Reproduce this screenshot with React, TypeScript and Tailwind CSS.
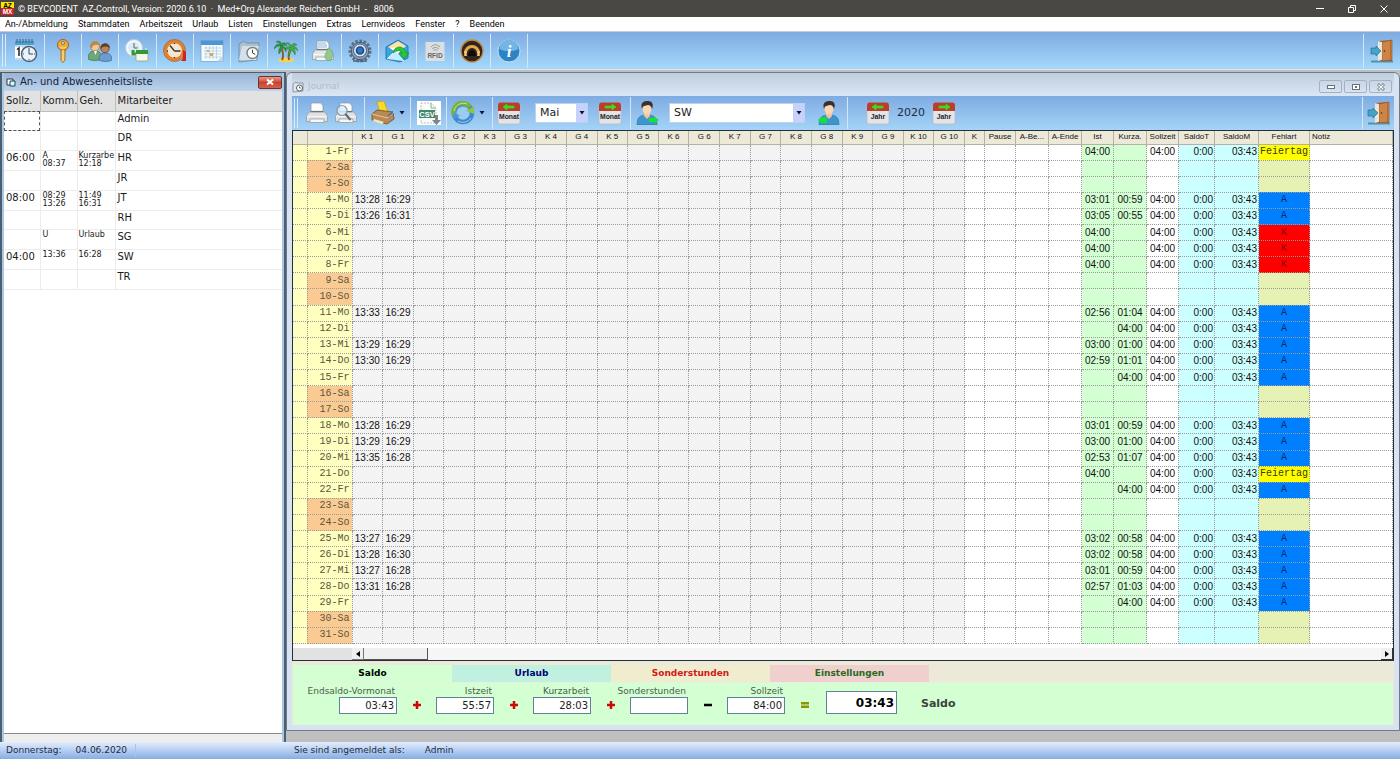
import React, { useState } from 'react';

type IconName =
  | 'calendarClock' | 'key' | 'users' | 'clockNote' | 'alarm' | 'calendar' | 'folderClock'
  | 'palms' | 'printerGreen' | 'gear' | 'mail' | 'rfid' | 'headset' | 'info';

interface Employee {
  soll: string;
  komm: string[];
  geh: string[];
  name: string;
}

interface Day {
  k1?: string;
  g1?: string;
  ist?: string;
  kurz?: string;
  art?: string;
}

const menuItems = [
  'An-/Abmeldung', 'Stammdaten', 'Arbeitszeit', 'Urlaub', 'Listen', 'Einstellungen',
  'Extras', 'Lernvideos', 'Fenster', '?', 'Beenden',
];

const tools: { icon: IconName; label: string }[] = [
  { icon: 'calendarClock', label: 'An-/Abmeldung' },
  { icon: 'key', label: 'Passwort' },
  { icon: 'users', label: 'Mitarbeiter' },
  { icon: 'clockNote', label: 'Arbeitszeit' },
  { icon: 'alarm', label: 'Sollzeit' },
  { icon: 'calendar', label: 'Kalender' },
  { icon: 'folderClock', label: 'Journal' },
  { icon: 'palms', label: 'Urlaub' },
  { icon: 'printerGreen', label: 'Drucken' },
  { icon: 'gear', label: 'Einstellungen' },
  { icon: 'mail', label: 'Nachricht' },
  { icon: 'rfid', label: 'RFID' },
  { icon: 'headset', label: 'Support' },
  { icon: 'info', label: 'Info' },
];

const employees: Employee[] = [
  { soll: '', komm: [], geh: [], name: 'Admin' },
  { soll: '', komm: [], geh: [], name: 'DR' },
  { soll: '06:00', komm: ['A', '08:37'], geh: ['Kurzarbe', '12:18'], name: 'HR' },
  { soll: '', komm: [], geh: [], name: 'JR' },
  { soll: '08:00', komm: ['08:29', '13:26'], geh: ['11:49', '16:31'], name: 'JT' },
  { soll: '', komm: [], geh: [], name: 'RH' },
  { soll: '', komm: ['U'], geh: ['Urlaub'], name: 'SG' },
  { soll: '04:00', komm: ['13:36'], geh: ['16:28'], name: 'SW' },
  { soll: '', komm: [], geh: [], name: 'TR' },
];

const weekdays = ['Mo', 'Di', 'Mi', 'Do', 'Fr', 'Sa', 'So'];

const days: Record<number, Day> = {
  1: { ist: '04:00', art: 'Feiertag' },
  4: { k1: '13:28', g1: '16:29', ist: '03:01', kurz: '00:59', art: 'A' },
  5: { k1: '13:26', g1: '16:31', ist: '03:05', kurz: '00:55', art: 'A' },
  6: { ist: '04:00', art: 'K' },
  7: { ist: '04:00', art: 'K' },
  8: { ist: '04:00', art: 'K' },
  11: { k1: '13:33', g1: '16:29', ist: '02:56', kurz: '01:04', art: 'A' },
  12: { kurz: '04:00', art: 'A' },
  13: { k1: '13:29', g1: '16:29', ist: '03:00', kurz: '01:00', art: 'A' },
  14: { k1: '13:30', g1: '16:29', ist: '02:59', kurz: '01:01', art: 'A' },
  15: { kurz: '04:00', art: 'A' },
  18: { k1: '13:28', g1: '16:29', ist: '03:01', kurz: '00:59', art: 'A' },
  19: { k1: '13:29', g1: '16:29', ist: '03:00', kurz: '01:00', art: 'A' },
  20: { k1: '13:35', g1: '16:28', ist: '02:53', kurz: '01:07', art: 'A' },
  21: { ist: '04:00', art: 'Feiertag' },
  22: { kurz: '04:00', art: 'A' },
  25: { k1: '13:27', g1: '16:29', ist: '03:02', kurz: '00:58', art: 'A' },
  26: { k1: '13:28', g1: '16:30', ist: '03:02', kurz: '00:58', art: 'A' },
  27: { k1: '13:27', g1: '16:28', ist: '03:01', kurz: '00:59', art: 'A' },
  28: { k1: '13:31', g1: '16:28', ist: '02:57', kurz: '01:03', art: 'A' },
  29: { kurz: '04:00', art: 'A' },
};

const dayNumbers = Array.from({ length: 31 }, (_, i) => i + 1);
const pairs = Array.from({ length: 10 }, (_, i) => i + 1);

const artColors: Record<string, string> = {
  A: 'bg-[#0080ff] text-[#0a2a6a]',
  K: 'bg-[#ff0000] text-[#8a0000]',
  Feiertag: 'bg-[#ffff00] text-[#3a3a00]',
};

const tabs = [
  { label: 'Saldo', style: 'bg-[#d3ffd3] text-black' },
  { label: 'Urlaub', style: 'bg-[#bff0e0] text-[#000070]' },
  { label: 'Sonderstunden', style: 'bg-[#f0edcf] text-[#d01818]' },
  { label: 'Einstellungen', style: 'bg-[#f0cfcf] text-[#2a6a1a]' },
];

const balance = [
  { id: 'vormonat', label: 'Endsaldo-Vormonat', value: '03:43', op: '+' },
  { id: 'istzeit', label: 'Istzeit', value: '55:57', op: '+' },
  { id: 'kurzarbeit', label: 'Kurzarbeit', value: '28:03', op: '+' },
  { id: 'sonder', label: 'Sonderstunden', value: '', op: '-' },
  { id: 'sollzeit', label: 'Sollzeit', value: '84:00', op: '=' },
];

function Clock({ x, y, r, rim, face = '#f4f9fd' }: { x: number; y: number; r: number; rim: string; face?: string }) {
  return (
    <g>
      <circle cx={x} cy={y} r={r} fill={face} stroke={rim} strokeWidth={r / 4} />
      <path d={`M${x} ${y - r * 0.6}V${y}L${x + r * 0.5} ${y + r * 0.25}`} fill="none" stroke="#34495e" strokeWidth="1" />
    </g>
  );
}

function PrinterShape({ body = '#e4e6e8', edge = '#8e969c', paper = '#fbfcfd' }) {
  return (
    <g stroke={edge} strokeWidth="0.7">
      <path d="M6 2h10l2 3v7H6z" fill={paper} />
      <path d="M4 11h16l2.500 4v5.500H1.500V15z" fill={body} />
      <path d="M2 15.500h20" stroke="#fff" />
      <path d="M5 18h14v3.500H5z" fill="#f6f7f7" />
      <path d="M6 10.500h12" stroke="#6d757b" strokeWidth="1.200" />
    </g>
  );
}

function ToolIcon({ name }: { name: IconName }) {
  return (
    <svg viewBox="0 0 24 24" className="h-6 w-6" aria-hidden="true">
      {name === 'calendarClock' && (
        <g>
          <rect x="1" y="3" width="19" height="18" fill="#bcdcf7" />
          <rect x="1" y="2" width="19" height="4" fill="#4e9fc9" />
          <path d="M3 0v4M6 0v4M9 0v4M12 0v4M15 0v4M18 0v4" stroke="#2c6486" strokeWidth="1" />
          <rect x="1" y="8" width="7" height="11" fill="#fff" />
          <path d="M3 10.500L5 9v8" fill="none" stroke="#222" strokeWidth="1.500" />
          <circle cx="15" cy="15" r="7.500" fill="#e8f3fb" stroke="#50606e" strokeWidth="1.500" />
          <path d="M15 10v5h4M15 9v1M21 15h-1M15 21v-1M9 15h1" fill="none" stroke="#3b4954" />
        </g>
      )}
      {name === 'key' && (
        <g>
          <circle cx="12" cy="6" r="5.500" fill="#f0ae3a" stroke="#9c6515" />
          <circle cx="12" cy="4" r="1.700" fill="#a9c9ec" stroke="#9c6515" strokeWidth="0.700" />
          <path d="M10 11h4v10l-2 2.500-2-2z" fill="#f2b64a" stroke="#9c6515" strokeWidth="0.800" />
          <path d="M12 11v11M9 8c2 1.500 4 1.500 6 0" fill="none" stroke="#fde3a0" />
        </g>
      )}
      {name === 'users' && (
        <g strokeWidth="0.700">
          <path d="M0 20c0-6 3-8 7-8s7 2 7 8c-4 2-10 2-14 0z" fill="#6fa878" stroke="#3c7547" />
          <path d="M11 21c0-6 3-7 6.500-7s6.500 2 6.500 7c-4 2-9 2-13 0z" fill="#6c9ccf" stroke="#3d6799" />
          <circle cx="7" cy="7.500" r="4.500" fill="#f0c89c" stroke="#9b7044" />
          <path d="M2 9c-1-9 10-9 10-2-3-2-7-2-8 2z" fill="#b98a4a" />
          <circle cx="17" cy="9.500" r="4.200" fill="#b8855c" stroke="#5e3719" />
          <path d="M12.500 10c-1-7 9-8 9.500-1-4-2-7-2-9.500 1z" fill="#5f3f28" />
          <path d="M6 12l1.500 4L9 12" fill="#fff" />
        </g>
      )}
      {name === 'clockNote' && (
        <g>
          <circle cx="9" cy="9" r="8.500" fill="#f2f8fc" stroke="#b5cbdc" />
          <circle cx="9" cy="9" r="6" fill="#dceaf4" />
          <path d="M9 4v5h4" fill="none" stroke="#4b6577" />
          <path d="M8 11v4h4" fill="none" stroke="#2e9a2e" strokeWidth="3" />
          <rect x="11" y="12" width="12" height="10" rx="1" fill="#f4f6ee" stroke="#8b9a80" strokeWidth="0.700" />
          <rect x="11" y="11" width="12" height="4" fill="#2f9a35" />
          <path d="M13 11V9M21 11V9" stroke="#e5efe0" />
        </g>
      )}
      {name === 'alarm' && (
        <g>
          <circle cx="11.500" cy="11.500" r="9" fill="#f5e6d2" stroke="#e0822c" strokeWidth="3.500" />
          <circle cx="11.500" cy="11.500" r="11" fill="none" stroke="#a65a1e" strokeWidth="0.700" />
          <path d="M11.500 12L7 6.500M11.500 12h6M11.500 4v1M11.500 19v-1M4 12h1" stroke="#333" strokeWidth="1.300" />
          <path d="M20 11l3 2v9h-5l2-3z" fill="#d32020" />
        </g>
      )}
      {name === 'calendar' && (
        <g>
          <rect x="1" y="1.500" width="22" height="21" fill="#f5fafe" stroke="#7b9cbc" strokeWidth="0.700" />
          <rect x="1" y="1.500" width="22" height="4.500" fill="#4a97d4" />
          <path d="M4 9h17M4 12h17M4 15h17M4 18h17M6 7v13M9.500 7v13M13 7v13M16.500 7v13" stroke="#a9cde4" strokeWidth="0.700" />
          <path d="M7 11h2v2H7zM10 14h3v3h-3z" fill="#e8a23e" />
          <path d="M17 22.500l6-6v6z" fill="#bfd3e5" />
        </g>
      )}
      {name === 'folderClock' && (
        <g>
          <path d="M2 5l5-3 2 2h13l-2 17-18 2z" fill="#aebfcd" stroke="#718598" strokeWidth="0.800" />
          <path d="M5 7h17l-3 14H2z" fill="#d5e1ea" />
          <Clock x={15.5} y={14} r={5.5} rim="#777f87" face="#fffef3" />
        </g>
      )}
      {name === 'palms' && (
        <g>
          <ellipse cx="12" cy="21" rx="8" ry="2.500" fill="#f4d35b" />
          <path d="M8 21C10 17 9 12 7 7M15 21c-1-4 0-8 2-12" fill="none" stroke="#8f5d2c" strokeWidth="2" />
          <path d="M7 7C4 3 1 6 0 10c3-3 5-3 7-3-2 2-3 5-2 8 2-2 3-5 3-7 2 1 3 3 4 5 1-3-1-6-4-6 2-1 3-1 5 0C12 3 9 3 7.500 5 7 2 4 1 2 3c3 0 4 2 5 4z" fill="#2f9440" stroke="#1c6d2c" strokeWidth="0.400" />
          <path d="M17 9c-2-2-4-2-6 1 3 0 4 0 5 1-2 1-2 4-1 6 1-2 2-4 2-6 2 1 3 3 4 5 1-3 0-5-2-6 2 0 3 0 5 2-1-4-3-5-5-4 1-2 3-2 4-2-2-3-5-1-6 1-1-3-3-4-5-3 3 1 4 3 5 5z" fill="#43ab48" stroke="#1c6d2c" strokeWidth="0.400" />
        </g>
      )}
      {name === 'printerGreen' && (
        <g>
          <PrinterShape />
          <path d="M7 4h8M7 6h9M7 8h9" stroke="#94b4cf" />
          <path d="M17 9c5 2 6 6 3 12-4 2-6-1-6-4 0-4 3-4 3-8z" fill="#93c98b" stroke="#6a9e65" strokeWidth="0.600" />
        </g>
      )}
      {name === 'gear' && (
        <g>
          <circle cx="12" cy="12" r="10" fill="none" stroke="#5c6e82" strokeWidth="3" strokeDasharray="2.600 1.600" />
          <circle cx="12" cy="12" r="8.700" fill="#8ba0b8" stroke="#4a5b70" />
          <circle cx="12" cy="11.500" r="6.500" fill="#d4e3f1" stroke="#42648e" />
          <circle cx="12" cy="11.500" r="3.600" fill="#2c74bd" stroke="#1a4373" strokeWidth="1.400" />
          <path d="M5 22h14" stroke="#54667a" strokeWidth="1.500" />
        </g>
      )}
      {name === 'mail' && (
        <g>
          <path d="M1 8l12-7 10 6v12l-8 4-14-3z" fill="#35a6e0" stroke="#136da9" strokeWidth="0.800" />
          <path d="M3 8l10-6 8 5-8 7z" fill="#ffe3a3" />
          <path d="M5 9l14-1-6 7z" fill="#fff" />
          <path d="M2 20l8-8 9 10" fill="#c5ebfb" stroke="#fff" strokeWidth="0.700" />
          <path d="M8 14c1-8 12-8 13 0h3l-5 6-5-6h3c-1-3-5-3-9 0z" fill="#28c735" stroke="#128a1d" strokeWidth="0.600" />
        </g>
      )}
      {name === 'rfid' && (
        <g>
          <rect x="2.500" y="3" width="19" height="19" fill="#dcdfe1" />
          <path d="M9 10c2-2 5-2 7 0M10.500 11.500c1-1 3-1 4 0M8 8c3-3 6-3 9 0" fill="none" stroke="#8e8e8e" strokeWidth="0.900" />
          <text x="12" y="19" textAnchor="middle" fontSize="6.500" fontWeight="700" fill="#666" fontFamily="Liberation Sans, sans-serif">RFID</text>
        </g>
      )}
      {name === 'headset' && (
        <g>
          <circle cx="12" cy="12" r="11" fill="#33251e" stroke="#c18a3c" strokeWidth="1.300" />
          <path d="M5.500 14a6.500 6.500 0 1 1 13 0" fill="none" stroke="#e6a748" strokeWidth="3" />
          <path d="M5.500 12v5M18.500 12v5" stroke="#f3c878" strokeWidth="2.500" />
          <path d="M8 17c0-8 8-8 8 0" fill="#100b08" />
        </g>
      )}
      {name === 'info' && (
        <g>
          <circle cx="12" cy="12" r="11" fill="#2c83c6" stroke="#e1edf7" strokeWidth="0.800" />
          <path d="M2.500 10a9.500 9.500 0 0 1 19 0c-6 3-13 3-19 0z" fill="#72b6e6" />
          <text x="12" y="18" textAnchor="middle" fontSize="17" fontStyle="italic" fontWeight="700" fill="#fff" fontFamily="Liberation Serif, serif">i</text>
        </g>
      )}
    </svg>
  );
}

function DoorIcon() {
  return (
    <svg viewBox="0 0 24 24" className="h-6 w-6" aria-hidden="true">
      <path d="M1 21.500h22v2H1z" fill="#5192a8" />
      <path d="M8 2l14-1v21H8z" fill="#9a6238" />
      <path d="M8 2l5 1.500v17L8 22z" fill="#eee5d4" />
      <path d="M12.500 3L22 1v20l-9.500 1z" fill="#cf8344" stroke="#8c5124" strokeWidth="0.600" />
      <path d="M20.500 2v19" stroke="#b56c33" />
      <circle cx="14.500" cy="12" r="0.800" fill="#442a15" />
      <path d="M1 9h5V7l5 5-5 5v-2H1z" fill="#46a4c8" stroke="#22748f" strokeWidth="0.700" />
    </svg>
  );
}

function PersonIcon({ flip }: { flip?: boolean }) {
  return (
    <svg viewBox="0 0 24 24" className="h-6 w-6" aria-hidden="true">
      <path d="M2 24c0-8 3-10 10-10s10 2 10 10z" fill="#3f94c9" stroke="#2a76a7" strokeWidth="0.600" />
      <path d="M9 12h6v3l-3 3-3-3z" fill="#f0c39b" />
      <ellipse cx="12" cy="8" rx="4.500" ry="5.500" fill="#f8d5b5" />
      <path d="M7 8C5 1 9 0 13 0s6 3 4 8c-1-3-2-4-4-4-3 1-5 0-6 4z" fill="#3d302c" />
      {flip ? (
        <path d="M10 16.500H5v-1L1 19l4 4v-1h5z" fill="#12e334" />
      ) : (
        <path d="M14 17h5v-1.500l5 3.500-5 3.500V21h-5z" fill="#12e334" />
      )}
    </svg>
  );
}

function StepIcon({ text, back }: { text: string; back?: boolean }) {
  return (
    <svg viewBox="0 0 24 24" className="h-6 w-6" aria-hidden="true">
      <rect x="1" y="2" width="22" height="21" rx="2" fill="#e4e3e6" stroke="#b9bac4" strokeWidth="0.700" />
      <path d="M1 10V4q0-2.500 2-2.500h18q2 0 2 2.500v6z" fill="#b8402a" />
      <path
        d={back ? 'M6 6l4-3v2h7v2h-7v2z' : 'M18 6l-4-3v2H7v2h7v2z'}
        fill="#35df22"
        stroke="#35df22"
        strokeWidth="0.600"
      />
      <text x="12" y="18" textAnchor="middle" fontSize="6.800" fontWeight="700" fill="#222" fontFamily="Liberation Sans, sans-serif">{text}</text>
    </svg>
  );
}

function PrintIcon({ zoom, color }: { zoom?: boolean; color?: boolean }) {
  return (
    <svg viewBox="0 0 24 24" className="h-6 w-6" aria-hidden="true">
      {color ? (
        <g>
          <path d="M6 1l7-1 4 11-8 1z" fill="#f8d927" stroke="#bd941c" strokeWidth="0.600" />
          <path d="M1 13l5-4 16 2 1 7-7 5-15-4z" fill="#b98953" stroke="#6e4a25" strokeWidth="0.800" />
          <path d="M1 13l15 4 7-6" fill="none" stroke="#e6c79b" />
          <path d="M3 18l10 3-2 2-9-3z" fill="#f2e9c0" />
          <path d="M17 14l5-4v2l-5 4z" fill="#3f6fae" />
        </g>
      ) : (
        <PrinterShape body="#dfe1e3" />
      )}
      {zoom && (
        <g>
          <circle cx="8" cy="9.500" r="5" fill="#dbeefb" fillOpacity="0.850" stroke="#8799a8" strokeWidth="1.200" />
          <path d="M11.500 13l5 6" stroke="#5a6670" strokeWidth="2" />
        </g>
      )}
    </svg>
  );
}

function CsvIcon() {
  return (
    <svg viewBox="0 0 24 24" className="h-6 w-6" aria-hidden="true">
      <rect width="24" height="24" fill="#fff" />
      <path d="M4 2h10l5 5v15H4z" fill="#fafafa" stroke="#b9c7bf" strokeDasharray="2 1" />
      <path d="M14 2v5h5" fill="none" stroke="#8eaaa0" />
      <rect x="2" y="9" width="16" height="8" fill="#3f8b6c" />
      <text x="10" y="16" textAnchor="middle" fontSize="7.500" fontWeight="700" fill="#fff" fontFamily="Liberation Sans, sans-serif">CSV</text>
      <path d="M18 14h3v5h3l-4.500 5-4.500-5h3z" fill="#7f858c" />
    </svg>
  );
}

function RefreshIcon() {
  return (
    <svg viewBox="0 0 24 24" className="h-6 w-6" aria-hidden="true">
      <circle cx="12" cy="12" r="9" fill="none" stroke="#3d88cd" strokeWidth="4.500" />
      <circle cx="12" cy="12" r="6" fill="#9ccbf2" />
      <path d="M3 14a9 9 0 0 1 16-8" fill="none" stroke="#79b43c" strokeWidth="4.500" />
      <path d="M23 5v8l-8-3z" fill="#8cc63f" />
      <path d="M2 18l1-7 6 4z" fill="#4a97da" />
      <path d="M3 10a9.500 9.500 0 0 1 13-7" fill="none" stroke="#c4e38f" strokeWidth="1" />
      <path d="M7 20a9.500 9.500 0 0 0 13-3" fill="none" stroke="#9dccf3" strokeWidth="1" />
    </svg>
  );
}

function Grip() {
  return (
    <span className="flex shrink-0 gap-0.5 self-stretch px-0.5 py-0.5">
      <span className="w-px bg-[#dcebfa]" />
      <span className="w-px bg-[#dcebfa]" />
    </span>
  );
}

function Triangle() {
  return (
    <svg viewBox="0 0 6 4" className="h-1 w-1.5" aria-hidden="true">
      <path d="M0.500 0h5L3 3.500z" fill="#101030" />
    </svg>
  );
}

function Picker({ label, value, options, onChange, className }: {
  label: string;
  value: string;
  options: string[];
  onChange: (value: string) => void;
  className: string;
}) {
  return (
    <div className={`relative flex h-5 shrink-0 border border-[#b9d3f2] bg-white ${className}`}>
      <select
        aria-label={label}
        value={value}
        onChange={(e) => onChange(e.target.value)}
        className="w-full appearance-none bg-transparent pl-1 text-[11px] leading-4 text-[#222]"
      >
        {options.map((option) => (
          <option key={option}>{option}</option>
        ))}
      </select>
      <span className="pointer-events-none absolute inset-y-0 right-0 flex w-[11px] items-center justify-center bg-[#c6d2fb]">
        <Triangle />
      </span>
    </div>
  );
}

function AttendanceWindow() {
  return (
    <section className="flex w-[286px] shrink-0 flex-col border-x-2 border-t border-[#4a5f70] bg-[#a9c6e4] px-0.5">
      <header className="flex h-[18px] items-center gap-1 bg-linear-to-b from-[#98b5d5] to-[#bdd3ec] pl-0.5">
        <svg viewBox="0 0 10 10" className="h-2.5 w-2.5" aria-hidden="true">
          <path d="M1 2h6v6H1z" fill="#fff" stroke="#333" />
          <path d="M4 4h5v5H4z" fill="#dff3f3" stroke="#124c5c" />
        </svg>
        <h2 className="flex-1 text-[10px] leading-3 text-[#15233a]">An- und Abwesenheitsliste</h2>
        <button type="button" aria-label="Schließen" className="flex h-[13px] w-6 items-center justify-center rounded-xs border border-[#6e3028] bg-linear-to-b from-[#e39a8a] via-[#c9432c] to-[#d4614a]">
          <svg viewBox="0 0 8 8" className="h-2 w-2" aria-hidden="true">
            <path d="M1 1.500l6 5M7 1.500l-6 5" stroke="#fff" strokeWidth="2" />
          </svg>
        </button>
      </header>
      <div className="flex-1 border-b border-[#888] bg-white">
        <table className="h-[199px] w-full table-fixed border-collapse border-b border-[#777] text-[10px] leading-3 text-[#1a1a1a]">
          <thead>
            <tr className="h-5 bg-[#e2e2e2] text-left">
              <th className="w-9 border-r border-b border-[#bdbdbd] pl-0.5 font-normal">Sollz.</th>
              <th className="w-[37px] border-r border-b border-[#bdbdbd] pl-0.5 font-normal">Komm.</th>
              <th className="w-[38px] border-r border-b border-[#bdbdbd] pl-0.5 font-normal">Geh.</th>
              <th className="border-b border-[#bdbdbd] pl-0.5 font-normal">Mitarbeiter</th>
            </tr>
          </thead>
          <tbody>
            {employees.map((person, i) => (
              <tr key={person.name} className="h-[19px] border-b border-[#ececec] align-top">
                <td className={`border-r border-[#ececec] pt-px pl-0.5 ${i === 0 ? 'outline-1 -outline-offset-1 outline-dashed outline-[#555]' : ''}`}>
                  {person.soll}
                </td>
                <td className="border-r border-[#ececec] pt-px pl-0.5 text-[8px] leading-2">
                  {person.komm.map((line) => <div key={line}>{line}</div>)}
                </td>
                <td className="border-r border-[#ececec] pt-px pl-px text-[8px] leading-2">
                  {person.geh.map((line) => <div key={line}>{line}</div>)}
                </td>
                <td className="pt-px pl-0.5">{person.name}</td>
              </tr>
            ))}
          </tbody>
        </table>
      </div>
      <div className="h-2 bg-[#eeeeee]" />
    </section>
  );
}

function JournalToolbar() {
  const [month, setMonth] = useState('Mai');
  const [employee, setEmployee] = useState('SW');

  return (
    <div className="flex h-[34px] items-center bg-linear-to-b from-[#7eabe2] to-[#a5d4f7]">
      <Grip />
      <button type="button" aria-label="Drucken" className="flex w-[34px] justify-center"><PrintIcon /></button>
      <button type="button" aria-label="Vorschau" className="flex w-[31px] items-center border-r border-[#d5e6f7] py-1"><PrintIcon zoom /></button>
      <button type="button" aria-label="Druckauswahl" className="flex w-[46px] items-center gap-1 border-r border-[#d5e6f7] py-1 pl-1.5"><PrintIcon color /><Triangle /></button>
      <button type="button" aria-label="CSV-Export" className="flex w-9 justify-center border-r border-[#d5e6f7] py-1"><CsvIcon /></button>
      <button type="button" aria-label="Aktualisieren" className="flex w-[46px] items-center gap-1 border-r border-[#d5e6f7] py-1 pl-1"><RefreshIcon /><Triangle /></button>
      <button type="button" aria-label="Monat zurück" className="mx-1"><StepIcon text="Monat" back /></button>
      <Picker label="Monat" value={month} options={['April', 'Mai', 'Juni']} onChange={setMonth} className="mx-2.5 w-[53px]" />
      <button type="button" aria-label="Monat vor" className="flex w-[33px] border-r border-[#d5e6f7] py-1"><StepIcon text="Monat" /></button>
      <button type="button" aria-label="Vorheriger Mitarbeiter" className="ml-1"><PersonIcon /></button>
      <Picker label="Mitarbeiter" value={employee} options={['DR', 'HR', 'JR', 'JT', 'RH', 'SG', 'SW', 'TR']} onChange={setEmployee} className="mx-2.5 w-[136px]" />
      <button type="button" aria-label="Nächster Mitarbeiter" className="ml-0.5 flex w-[31px] border-r border-[#d5e6f7] py-1"><PersonIcon flip /></button>
      <button type="button" aria-label="Jahr zurück" className="ml-4.5"><StepIcon text="Jahr" back /></button>
      <span className="w-[42px] text-center text-[11px] text-[#1c2c44]">2020</span>
      <button type="button" aria-label="Jahr vor"><StepIcon text="Jahr" /></button>
      <button type="button" aria-label="Journal schließen" className="ml-auto flex w-8 justify-center border-l border-[#d5e6f7] py-1"><DoorIcon /></button>
    </div>
  );
}

function JournalTable() {
  return (
    <table className="h-[513px] w-full table-fixed border-collapse font-['Liberation_Sans',sans-serif] text-[10px] leading-[14px] text-[#111] [&_td]:border-r [&_td]:border-b [&_td]:border-dotted [&_td]:border-[#9c9c9c] [&_td]:whitespace-nowrap">
      <colgroup>
        <col className="w-[14px]" />
        <col className="w-[45px]" />
        {pairs.map((n) => (
          <React.Fragment key={n}>
            <col />
            <col />
          </React.Fragment>
        ))}
        <col className="w-5" />
        <col className="w-[31px]" />
        <col className="w-[33px]" />
        <col className="w-[33px]" />
        <col className="w-8" />
        <col className="w-[33px]" />
        <col className="w-8" />
        <col className="w-9" />
        <col className="w-11" />
        <col className="w-[51px]" />
        <col className="w-[83px]" />
      </colgroup>
      <thead>
        <tr className="h-[13px] bg-[#ece9d8] text-[8px] leading-3 [&>th]:border-r [&>th]:border-b [&>th]:border-[#b5b2a5] [&>th]:font-normal [&>th]:whitespace-nowrap">
          <th />
          <th />
          {pairs.map((n) => (
            <React.Fragment key={n}>
              <th>K {n}</th>
              <th>G {n}</th>
            </React.Fragment>
          ))}
          <th>K</th>
          <th>Pause</th>
          <th>A-Be...</th>
          <th>A-Ende</th>
          <th>Ist</th>
          <th>Kurza.</th>
          <th>Sollzeit</th>
          <th>SaldoT</th>
          <th>SaldoM</th>
          <th>Fehlart</th>
          <th className="pl-0.5 text-left">Notiz</th>
        </tr>
      </thead>
      <tbody>
        {dayNumbers.map((n) => {
          const weekday = weekdays[(n + 3) % 7];
          const weekend = weekday === 'Sa' || weekday === 'So';
          const day = days[n] ?? {};
          return (
            <tr key={n}>
              <td className="bg-[#ffffc0]" />
              <td className={`pr-0.5 text-right font-['Liberation_Mono',monospace] text-[#5c5540] ${weekend ? 'bg-[#f9cb93]' : 'bg-[#ffffc0]'}`}>
                {n}-{weekday}
              </td>
              {pairs.map((p) => (
                <React.Fragment key={p}>
                  <td className="bg-[#f3f3f3] text-center">{p === 1 && day.k1}</td>
                  <td className="bg-[#f3f3f3] text-center">{p === 1 && day.g1}</td>
                </React.Fragment>
              ))}
              <td />
              <td />
              <td />
              <td />
              <td className="bg-[#d3ffd3] text-center">{day.ist}</td>
              <td className="bg-[#d3ffd3] text-center">{day.kurz}</td>
              <td className="text-center">{!weekend && '04:00'}</td>
              <td className="bg-[#ccffff] pr-px text-right">{!weekend && '0:00'}</td>
              <td className="bg-[#ccffff] pr-px text-right">{!weekend && '03:43'}</td>
              <td className={`text-center font-['Liberation_Mono',monospace] ${day.art ? artColors[day.art] : 'bg-[#e6f2b4]'}`}>
                {day.art}
              </td>
              <td />
            </tr>
          );
        })}
      </tbody>
    </table>
  );
}

function Operator({ op }: { op: string }) {
  return (
    <svg viewBox="0 0 10 10" className="mx-auto mb-1 h-2.5 w-2.5" role="img" aria-label={op}>
      {op === '+' && <path d="M5 1v8M1 5h8" stroke="#cc0808" strokeWidth="2.500" />}
      {op === '-' && <path d="M1 5h8" stroke="#000" strokeWidth="2.500" />}
      {op === '=' && <path d="M1 3.200h8M1 6.800h8" stroke="#8c9400" strokeWidth="2.500" />}
    </svg>
  );
}

function BalancePanel() {
  const [active, setActive] = useState('Saldo');

  return (
    <div className="bg-[#ece9d8] px-px pt-1">
      <div role="tablist" className="flex h-[18px] border-b border-[#e4f0e0]">
        {tabs.map((tab) => (
          <button
            key={tab.label}
            type="button"
            role="tab"
            aria-selected={active === tab.label}
            onClick={() => setActive(tab.label)}
            className={`w-[159px] text-[9px] font-bold ${tab.style}`}
          >
            {tab.label}
          </button>
        ))}
      </div>
      <div className="flex h-[42px] items-end bg-[#d3ffd3] pb-[11px] pl-[46px]">
        {balance.map((field) => (
          <React.Fragment key={field.id}>
            <div className="flex w-[58px] shrink-0 flex-col items-end">
              <label htmlFor={field.id} className="pr-0.5 text-[9px] leading-3 whitespace-nowrap text-[#4c5c4c]">{field.label}</label>
              <input
                id={field.id}
                defaultValue={field.value}
                className="h-[17px] w-full border border-[#5f8296] bg-white px-0.5 text-right text-[10px] text-[#222]"
              />
            </div>
            <span className="w-[39px] shrink-0">
              <Operator op={field.op} />
            </span>
          </React.Fragment>
        ))}
        <input
          id="saldo"
          defaultValue="03:43"
          className="ml-0.5 h-[23px] w-[71px] border border-[#5f8296] bg-white px-0.5 text-right text-xs font-bold text-black"
        />
        <label htmlFor="saldo" className="ml-6 pb-0.5 text-[11px] leading-4 font-bold text-[#3a443a]">Saldo</label>
      </div>
    </div>
  );
}

function JournalWindow() {
  return (
    <section className="mb-[11px] min-w-0 flex-1 rounded-t-md border border-[#6d7b8c] bg-[#d8e2f0] px-[5px] pb-[5px]">
      <header className="flex h-[23px] items-center gap-1 bg-linear-to-b from-[#c0cddd] to-[#dbe7f5] pt-1">
        <svg viewBox="0 0 12 12" className="h-3 w-3" aria-hidden="true">
          <path d="M1 3l3-2 1 1h6v8L1 11z" fill="#dfe5ea" stroke="#6e7a86" strokeWidth="0.700" />
          <circle cx="7.500" cy="7" r="3" fill="#fff" stroke="#5d666e" />
          <path d="M7.500 5.500V7H9" fill="none" stroke="#333" strokeWidth="0.700" />
        </svg>
        <h2 className="flex-1 text-[9px] text-[#b3bcc6]">Journal</h2>
        <div className="flex gap-0.5 pr-0.5">
          <button type="button" aria-label="Minimieren" className="flex h-[13px] w-[23px] items-center justify-center rounded-xs border border-[#a5b1c2]">
            <span className="h-1 w-2 border border-[#666f7c] bg-white" />
          </button>
          <button type="button" aria-label="Wiederherstellen" className="flex h-[13px] w-[23px] items-center justify-center rounded-xs border border-[#a5b1c2]">
            <span className="flex h-1.5 w-2 items-center justify-center border border-[#666f7c] bg-white"><span className="h-0.5 w-0.5 bg-[#666f7c]" /></span>
          </button>
          <button type="button" aria-label="Schließen" className="flex h-[13px] w-[23px] items-center justify-center rounded-xs border border-[#a5b1c2]">
            <svg viewBox="0 0 8 8" className="h-2 w-2" aria-hidden="true">
              <path d="M1 1l6 6M7 1L1 7" stroke="#666f7c" strokeWidth="2.600" />
              <path d="M1.500 1.500l5 5M6.500 1.500l-5 5" stroke="#fff" strokeWidth="1.200" />
            </svg>
          </button>
        </div>
      </header>
      <JournalToolbar />
      <div className="border border-[#222f3d] bg-white">
        <JournalTable />
        <div className="mt-1 flex h-3 bg-[#f6f6f6]">
          <span className="w-[59px] bg-[#e2e2e2]" />
          <button type="button" aria-label="Nach links" className="flex w-3 items-center justify-center border-r border-b border-[#777] bg-[#f0f0f0]">
            <svg viewBox="0 0 4 6" className="h-1.5 w-1" aria-hidden="true"><path d="M4 0v6L0 3z" /></svg>
          </button>
          <span className="w-16 border-r border-b border-[#555] bg-[#f0f0f0]" />
          <button type="button" aria-label="Nach rechts" className="ml-auto flex w-3 items-center justify-center border-r border-b border-[#333] bg-[#f0f0f0]">
            <svg viewBox="0 0 4 6" className="h-1.5 w-1" aria-hidden="true"><path d="M0 0v6l4-3z" /></svg>
          </button>
        </div>
      </div>
      <BalancePanel />
    </section>
  );
}

export default function App() {
  return (
    <div className="flex min-h-screen flex-col bg-[#bfbfbf] font-['DejaVu_Sans',sans-serif]">
      <header className="flex h-[17px] items-center bg-[#4a4845] pl-px font-['Roboto',sans-serif] text-white">
        <svg viewBox="0 0 13 13" className="h-[13px] w-[13px]" aria-hidden="true">
          <rect width="13" height="13" fill="#d22222" />
          <rect width="13" height="6" fill="#ffe600" />
          <text x="6.500" y="5.700" textAnchor="middle" fontSize="6.500" fontWeight="700" fontFamily="Liberation Sans, sans-serif">AZ</text>
          <text x="6.500" y="12" textAnchor="middle" fontSize="6.500" fontWeight="700" fill="#fff" fontFamily="Liberation Sans, sans-serif">MX</text>
        </svg>
        <h1 className="flex-1 pl-1 text-[9px] leading-4 whitespace-pre">© BEYCODENT  AZ-Controll, Version: 2020.6.10  ·  Med+Org Alexander Reichert GmbH  -   8006</h1>
        <div className="flex items-center gap-6 pr-3">
          <button type="button" aria-label="Minimieren" className="flex h-4 w-2 items-center"><span className="h-px w-2 bg-white" /></button>
          <button type="button" aria-label="Wiederherstellen">
            <svg viewBox="0 0 8 8" className="h-2 w-2" aria-hidden="true"><path d="M.500 2.500h5v5h-5zM2.500 2.500v-2h5v5h-2" fill="none" stroke="#fff" /></svg>
          </button>
          <button type="button" aria-label="Schließen">
            <svg viewBox="0 0 8 8" className="h-2 w-2" aria-hidden="true"><path d="M.500.500l7 7M7.500.500l-7 7" stroke="#fff" /></svg>
          </button>
        </div>
      </header>

      <nav className="flex h-[15px] gap-2.5 border-b border-[#c5cdd6] bg-white pl-[5px] font-['Roboto',sans-serif] text-[9px] leading-[14px] text-black">
        {menuItems.map((item) => (
          <a key={item} href="#">{item}</a>
        ))}
      </nav>

      <div className="flex h-[37px] items-center bg-linear-to-b from-[#7eabe2] to-[#a5d9fb]">
        <Grip />
        <div className="flex h-[34px] w-[520px]">
          {tools.map((tool) => (
            <button key={tool.icon} type="button" aria-label={tool.label} className="flex flex-1 items-center justify-center border-r border-[#d5e6f7]">
              <ToolIcon name={tool.icon} />
            </button>
          ))}
        </div>
        <button type="button" aria-label="Beenden" className="ml-auto flex h-[34px] w-[37px] items-center justify-center border-l border-[#d5e6f7]">
          <DoorIcon />
        </button>
      </div>

      <main className="flex flex-1 border-t border-[#dde5ee] pt-0.5">
        <AttendanceWindow />
        <JournalWindow />
      </main>

      <footer className="flex h-[17px] items-center bg-linear-to-b from-[#e3edfc] to-[#86ade4] text-[9px] text-[#1c2c44]">
        <div className="flex w-[288px] gap-3.5 pl-1.5">
          <span>Donnerstag:</span>
          <span className="border-r border-[#a9c3ea] pr-2">04.06.2020</span>
        </div>
        <div className="flex gap-5 pl-1.5">
          <span>Sie sind angemeldet als:</span>
          <span>Admin</span>
        </div>
      </footer>
    </div>
  );
}
